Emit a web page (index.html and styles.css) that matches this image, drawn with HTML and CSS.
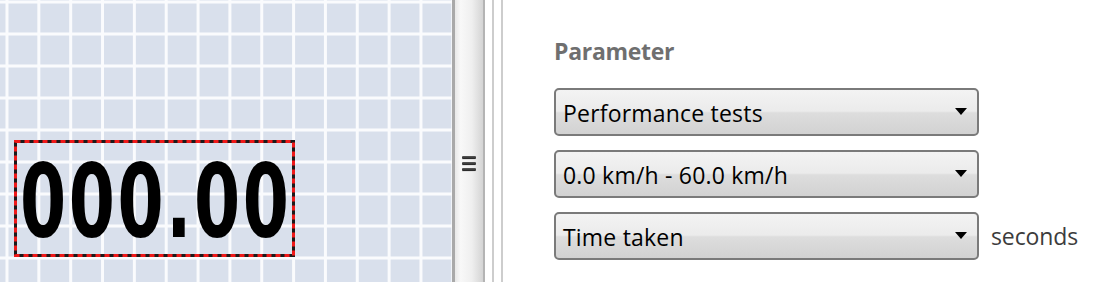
FILE: index.html
```html
<!DOCTYPE html>
<html>
<head>
<meta charset="utf-8">
<link rel="stylesheet" href="styles.css">
</head>
<body>
<div class="app">
  <div class="canvas">
    <div class="display">
      <svg class="frame" width="100%" height="100%">
        <rect class="frame-dots" x="1.5" y="1.5" width="278" height="114" />
        <rect class="frame-dash" x="1.5" y="1.5" width="278" height="114" />
      </svg>
      <span class="digits">000.00</span>
    </div>
  </div>
  <div class="splitter">
    <div class="grip"><span></span><span></span><span></span></div>
  </div>
  <div class="sep"><span></span><span></span></div>
  <div class="panel">
    <div class="label">Parameter</div>
    <div class="row">
      <div class="select"><span class="value">Performance tests</span><span class="arrow"></span></div>
    </div>
    <div class="row">
      <div class="select"><span class="value">0.0 km/h - 60.0 km/h</span><span class="arrow"></span></div>
    </div>
    <div class="row">
      <div class="select"><span class="value">Time taken</span><span class="arrow"></span></div>
      <span class="unit">seconds</span>
    </div>
  </div>
</div>
</body>
</html>
```
FILE: styles.css
```css
html, body {
  margin: 0;
  padding: 0;
  background: #ffffff;
  overflow: hidden;
}

.app {
  display: flex;
  width: 1100px;
  height: 282px;
  font-family: "Open Sans", "Noto Sans", sans-serif;
}

.canvas {
  width: 452px;
  height: 282px;
  flex: none;
  box-sizing: border-box;
  padding: 140px 0 0 14px;
  background-color: #d9e0ec;
  background-image:
    linear-gradient(to right, #fafbfd 0, #fafbfd 3px, transparent 3px),
    linear-gradient(to bottom, #fafbfd 0, #fafbfd 3px, transparent 3px);
  background-size: 31.85px 100%, 100% 32px;
  background-position: 5.5px 0, 0 0.5px;
}

.display {
  position: relative;
  width: 281px;
  height: 117px;
  display: flex;
  align-items: center;
  justify-content: center;
}

.frame {
  position: absolute;
  left: 0;
  top: 0;
}

.frame-dots {
  fill: none;
  stroke: #1a1a1a;
  stroke-width: 3;
}

.frame-dash {
  fill: none;
  stroke: #f01818;
  stroke-width: 3;
  stroke-dasharray: 5 4;
}

.digits {
  font-family: "DejaVu Sans", sans-serif;
  font-weight: bold;
  font-size: 102px;
  line-height: 1;
  color: #000;
  transform: scaleX(0.65);
  letter-spacing: 4px;
  white-space: nowrap;
  margin-top: 6px;
  margin-left: 3px;
}

.splitter {
  width: 33px;
  flex: none;
  box-sizing: border-box;
  border-left: 3px solid #a9a9a9;
  border-right: 2px solid #b4b4b4;
  background: linear-gradient(to right, #e8e8e8 0, #f8f8f8 20%, #efefef 60%, #d4d4d4 100%);
  display: flex;
  justify-content: center;
  padding-top: 156px;
}

.grip {
  display: flex;
  flex-direction: column;
  gap: 3px;
  margin-left: -1px;
}

.grip span {
  display: block;
  width: 14px;
  height: 3px;
  background: linear-gradient(to bottom, #5a5a5a, #222);
  border-radius: 1px;
  box-shadow: 0 1px 0 #e0e0e0;
}

.sep {
  width: 18px;
  flex: none;
  display: flex;
  gap: 7px;
  padding-left: 7px;
  box-sizing: border-box;
}

.sep span {
  display: block;
  width: 2px;
  height: 100%;
  background: #cdcdcd;
}

.panel {
  flex: 1;
  padding: 36px 0 0 51px;
  display: flex;
  flex-direction: column;
  gap: 14px;
}

.label {
  font-weight: bold;
  font-size: 23px;
  line-height: 30px;
  color: #6f6f6f;
  margin-bottom: 8px;
  letter-spacing: -0.3px;
}

.row {
  display: flex;
  align-items: center;
  gap: 12px;
}

.select {
  width: 425px;
  height: 48px;
  box-sizing: border-box;
  border: 2px solid #7a7a7a;
  border-radius: 5px;
  background: linear-gradient(to bottom, #f3f3f3 0, #ebebeb 48%, #dddddd 52%, #d2d2d2 100%);
  display: flex;
  align-items: center;
  justify-content: space-between;
  padding: 0 10px 0 7px;
}

.value {
  font-size: 23px;
  color: #000;
  letter-spacing: 0.2px;
  margin-top: 1px;
}

.arrow {
  width: 0;
  height: 0;
  border-left: 6px solid transparent;
  border-right: 6px solid transparent;
  border-top: 7px solid #000;
  margin-top: -2px;
}

.unit {
  font-size: 23px;
  color: #3c3c3c;
  letter-spacing: -0.1px;
}
```
